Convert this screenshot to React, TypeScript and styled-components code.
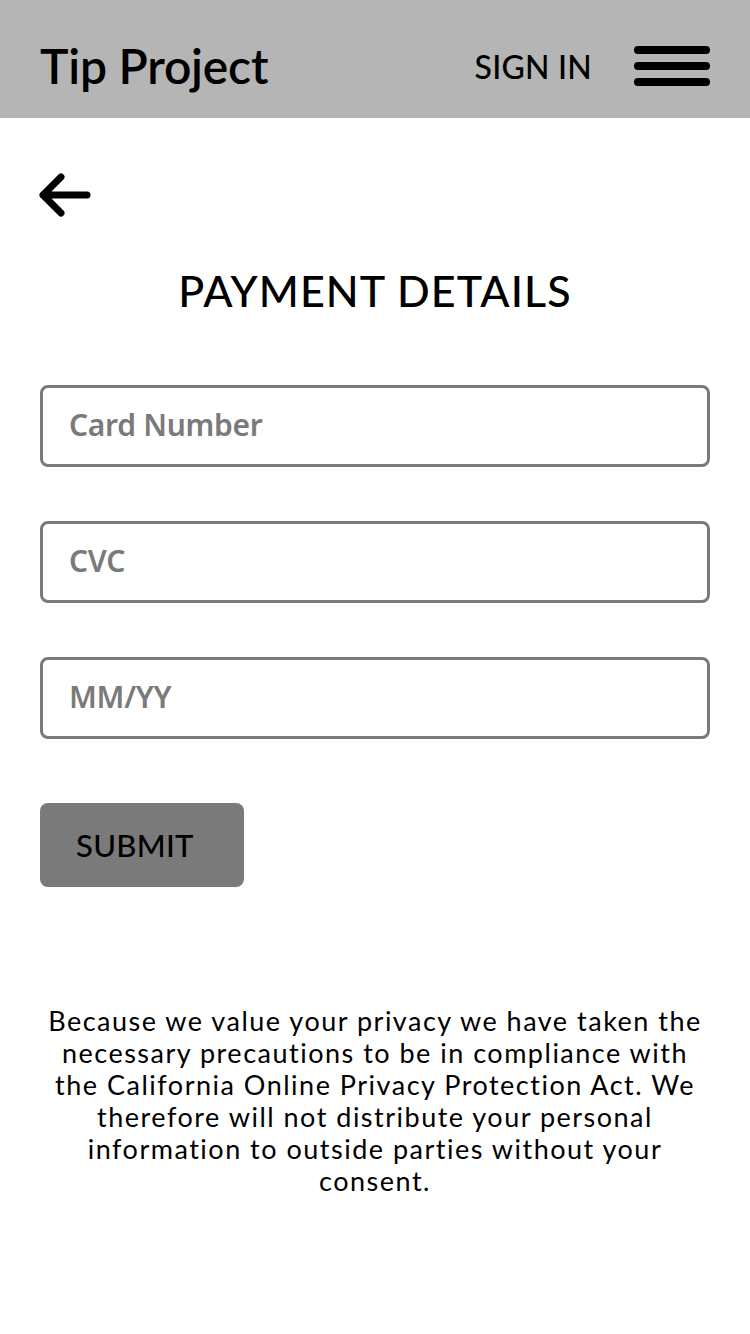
import React from "react";
import styled, { createGlobalStyle } from "styled-components";

const Global = createGlobalStyle`
  html, body { margin: 0; padding: 0; background: #fff; }
  body { font-family: "Lato", "Noto Sans", sans-serif; color: #000; }
  * { box-sizing: border-box; }
`;

const Page = styled.div`
  width: 750px;
  min-height: 1334px;
  background: #fff;
`;

const Header = styled.header`
  height: 118px;
  background: #b5b5b5;
  display: flex;
  align-items: center;
  justify-content: space-between;
  padding: 14px 40px 0;
`;

const Brand = styled.div`
  font-family: "Lato", sans-serif;
  font-size: 48px;
  font-weight: 600;
  letter-spacing: -0.2px;
  margin-top: -2px;
`;

const Nav = styled.div`
  display: flex;
  align-items: center;
  gap: 42px;
`;

const SignIn = styled.a`
  font-family: "Lato", sans-serif;
  font-size: 32px;
  font-weight: 500;
  letter-spacing: 0.2px;
  color: #000;
  text-decoration: none;
  margin-left: 6px;
`;

const Burger = styled.div`
  width: 76px;
  display: flex;
  flex-direction: column;
  gap: 8px;
`;

const Bar = styled.span`
  display: block;
  height: 8px;
  border-radius: 4px;
  background: #000;
`;

const Main = styled.main`
  padding: 57px 40px 0;
  display: flex;
  flex-direction: column;
`;

const Back = styled.button`
  width: 54px;
  height: 44px;
  padding: 0;
  margin-left: -2px;
  margin-top: -2px;
  border: none;
  background: none;
  cursor: pointer;
`;

const Title = styled.h1`
  margin: 48px 0 0;
  text-align: center;
  font-family: "Lato", sans-serif;
  font-size: 43px;
  font-weight: 500;
  letter-spacing: 1.1px;
  line-height: 52px;
`;

const Form = styled.form`
  margin-top: 68px;
  display: flex;
  flex-direction: column;
  gap: 54px;
`;

const Input = styled.input`
  width: 670px;
  height: 82px;
  border: 3px solid #7a7a7a;
  border-radius: 8px;
  padding: 0 26px 4px;
  font-family: "Noto Sans", sans-serif;
  font-size: 30px;
  font-weight: 600;
  letter-spacing: -0.3px;
  color: #333;
  outline: none;
  &::placeholder { color: #7a7a7a; opacity: 1; }
`;

const Submit = styled.button`
  margin-top: 10px;
  width: 204px;
  height: 84px;
  background: #7a7a7a;
  border: none;
  border-radius: 8px;
  padding: 0 0 0 36px;
  text-align: left;
  font-family: "Lato", sans-serif;
  font-size: 31px;
  font-weight: 500;
  letter-spacing: 0.3px;
  color: #000;
  cursor: pointer;
`;

const Privacy = styled.p`
  margin: 118px 0 0;
  text-align: center;
  font-family: "Lato", sans-serif;
  font-size: 27px;
  line-height: 32px;
  letter-spacing: 1.5px;
`;

export default function App() {
  return (
    <Page>
      <Global />
      <Header>
        <Brand>Tip Project</Brand>
        <Nav>
          <SignIn href="#">SIGN IN</SignIn>
          <Burger>
            <Bar />
            <Bar />
            <Bar />
          </Burger>
        </Nav>
      </Header>
      <Main>
        <Back aria-label="Back">
          <svg width="54" height="44" viewBox="0 0 54 44" fill="none">
            <path d="M49 22H5M23 4L5 22l18 18" stroke="#000" strokeWidth="7" strokeLinecap="round" strokeLinejoin="round" />
          </svg>
        </Back>
        <Title>PAYMENT DETAILS</Title>
        <Form onSubmit={(e) => e.preventDefault()}>
          <Input placeholder="Card Number" />
          <Input placeholder="CVC" />
          <Input placeholder="MM/YY" />
          <Submit type="submit">SUBMIT</Submit>
        </Form>
        <Privacy>
          Because we value your privacy we have taken the necessary precautions to be in compliance with the California Online Privacy Protection Act. We therefore will not distribute your personal information to outside parties without your consent.
        </Privacy>
      </Main>
    </Page>
  );
}
